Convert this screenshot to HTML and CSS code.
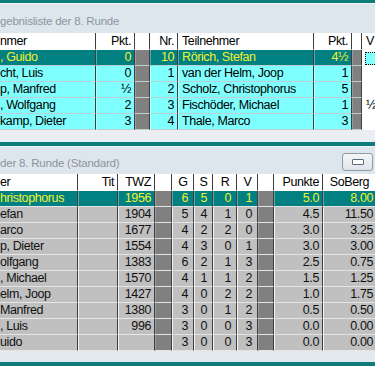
FILE: index.html
```html
<!DOCTYPE html>
<html lang="de">
<head>
    <meta charset="UTF-8">
    <meta name="viewport" content="width=device-width, initial-scale=1.0">
    <title>Turnier</title>
    <link rel="stylesheet" href="styles.css">
</head>
<body>
    <div class="band top"></div>

    <section class="win">
        <div class="caption">
            <span class="caption-text">gebnisliste der 8. Runde</span>
        </div>
        <table class="grid pairs">
            <colgroup>
                <col style="width:96px"><col style="width:39px"><col style="width:15px"><col style="width:28px">
                <col style="width:136px"><col style="width:38px"><col style="width:10px"><col style="width:13px">
            </colgroup>
            <thead>
                <tr><th class="l">nmer</th><th>Pkt.</th><th></th><th>Nr.</th><th class="l">Teilnehmer</th><th>Pkt.</th><th></th><th class="l">V</th></tr>
            </thead>
            <tbody>
                <tr class="sel"><td class="l">, Guido</td><td>0</td><td class="gap"></td><td>10</td><td class="l">Rörich, Stefan</td><td>4½</td><td class="gap"></td><td class="blank focus"><span></span></td></tr>
                <tr><td class="l">cht, Luis</td><td>0</td><td class="gap"></td><td>1</td><td class="l">van der Helm, Joop</td><td>1</td><td class="gap"></td><td class="blank"></td></tr>
                <tr><td class="l">p, Manfred</td><td>½</td><td class="gap"></td><td>2</td><td class="l">Scholz, Christophorus</td><td>5</td><td class="gap"></td><td class="blank"></td></tr>
                <tr><td class="l">, Wolfgang</td><td>2</td><td class="gap"></td><td>3</td><td class="l">Fischöder, Michael</td><td>1</td><td class="gap"></td><td class="blank l">½</td></tr>
                <tr><td class="l">kamp, Dieter</td><td>3</td><td class="gap"></td><td>4</td><td class="l">Thale, Marco</td><td>3</td><td class="gap"></td><td class="blank"></td></tr>
            </tbody>
        </table>
    </section>

    <div class="spacer"></div>
    <div class="band"></div>

    <section class="win">
        <div class="caption second">
            <span class="caption-text">der 8. Runde (Standard)</span>
            <button class="tool" type="button"><span class="tool-icon"></span></button>
        </div>
        <table class="grid standings">
            <colgroup>
                <col style="width:78px"><col style="width:40px"><col style="width:37px"><col style="width:17px">
                <col style="width:22px"><col style="width:19px"><col style="width:24px"><col style="width:21px">
                <col style="width:16px"><col style="width:49px"><col style="width:52px">
            </colgroup>
            <thead>
                <tr><th class="l">er</th><th>Tit</th><th>TWZ</th><th></th><th class="c">G</th><th class="c">S</th><th class="c">R</th><th class="c">V</th><th></th><th>Punkte</th><th class="c">SoBerg</th></tr>
            </thead>
            <tbody>
                <tr class="sel"><td class="l">hristophorus</td><td></td><td>1956</td><td class="gap"></td><td>6</td><td>5</td><td>0</td><td>1</td><td class="gap"></td><td>5.0</td><td>8.00</td></tr>
                <tr><td class="l">efan</td><td></td><td>1904</td><td class="gap"></td><td>5</td><td>4</td><td>1</td><td>0</td><td class="gap"></td><td>4.5</td><td>11.50</td></tr>
                <tr><td class="l">arco</td><td></td><td>1677</td><td class="gap"></td><td>4</td><td>2</td><td>2</td><td>0</td><td class="gap"></td><td>3.0</td><td>3.25</td></tr>
                <tr><td class="l">p, Dieter</td><td></td><td>1554</td><td class="gap"></td><td>4</td><td>3</td><td>0</td><td>1</td><td class="gap"></td><td>3.0</td><td>3.00</td></tr>
                <tr><td class="l">olfgang</td><td></td><td>1383</td><td class="gap"></td><td>6</td><td>2</td><td>1</td><td>3</td><td class="gap"></td><td>2.5</td><td>0.75</td></tr>
                <tr><td class="l">, Michael</td><td></td><td>1570</td><td class="gap"></td><td>4</td><td>1</td><td>1</td><td>2</td><td class="gap"></td><td>1.5</td><td>1.25</td></tr>
                <tr><td class="l">elm, Joop</td><td></td><td>1427</td><td class="gap"></td><td>4</td><td>0</td><td>2</td><td>2</td><td class="gap"></td><td>1.0</td><td>1.75</td></tr>
                <tr><td class="l">Manfred</td><td></td><td>1380</td><td class="gap"></td><td>3</td><td>0</td><td>1</td><td>2</td><td class="gap"></td><td>0.5</td><td>0.50</td></tr>
                <tr><td class="l">, Luis</td><td></td><td>996</td><td class="gap"></td><td>3</td><td>0</td><td>0</td><td>3</td><td class="gap"></td><td>0.0</td><td>0.00</td></tr>
                <tr><td class="l">uido</td><td></td><td></td><td class="gap"></td><td>3</td><td>0</td><td>0</td><td>3</td><td class="gap"></td><td>0.0</td><td>0.00</td></tr>
            </tbody>
        </table>
    </section>

    <div class="foot"></div>
    <div class="band"></div>
</body>
</html>
```

FILE: styles.css
```css
body {
    margin: 0;
    width: 375px;
    height: 366px;
    overflow: hidden;
    background-color: #e9eef3;
    font-family: "Liberation Sans", Arial, sans-serif;
    color: #000;
}
.band {
    height: 4px;
    background-color: #107b7b;
}
.band.top {
    height: 3px;
}
.caption {
    display: flex;
    align-items: center;
    justify-content: space-between;
    height: 29px;
    border-top: 1px solid #f2f5f8;
    background-color: #dde5ed;
    padding-right: 2px;
}
.caption.second {
    height: 27px;
}
.caption-text {
    font-size: 11.5px;
    letter-spacing: -0.2px;
    color: #8c959e;
    padding-top: 5px;
}
.tool {
    width: 31px;
    height: 18px;
    margin-top: 3px;
    border: 1px solid #8e9aa6;
    border-radius: 3px;
    background: linear-gradient(#f4f6f8, #dfe5eb);
    display: flex;
    align-items: center;
    justify-content: center;
    padding: 0;
}
.tool-icon {
    display: block;
    width: 10px;
    height: 4px;
    border: 1px solid #606a74;
    background-color: #fff;
    border-radius: 1px;
}
.spacer {
    height: 12px;
    background-color: #eaeef2;
}
.foot {
    height: 11px;
    background-color: #e3e9ef;
}
.grid {
    table-layout: fixed;
    border-collapse: separate;
    border-spacing: 0;
    width: 375px;
    font-size: 12.5px;
    letter-spacing: -0.4px;
}
.grid th, .grid td {
    padding: 0 3px;
    text-align: right;
    white-space: nowrap;
    overflow: hidden;
    font-weight: normal;
    line-height: 15px;
    border-left: 1px solid #f4f4f4;
    border-right: 1px solid #3e3e3e;
}
.grid th {
    line-height: 16px;
    background-color: #fff;
    border-left-color: #fff;
    border-bottom: 1px solid #fff;
}
.grid .l {
    text-align: left;
}
.grid .c {
    text-align: center;
}
.grid td:first-child, .grid th:first-child {
    padding-left: 0;
    border-left: none;
}
.grid td:last-child, .grid th:last-child {
    border-right: none;
}

/* Paarungen: cyan rows */
.pairs td {
    background-color: #80ffff;
    border-left-color: #c8ffff;
    border-bottom: 1px solid #bcd0d0;
}
.pairs td.blank {
    background-color: #fff;
    border-left-color: #fff;
    border-bottom-color: #fff;
    padding-right: 0;
}
.grid td.gap {
    background-color: #808080;
    border-left-color: #9a9a9a;
    padding: 0;
}
.grid tr.sel td {
    background-color: #008080;
    border-left-color: #5aa8a8;
    color: #f2f230;
}
.grid tr.sel td.gap {
    background-color: #808080;
    border-left-color: #9a9a9a;
}
.pairs tr.sel td.focus {
    background-color: #fff;
    border-left-color: #fff;
    padding: 1px 0 0 2px;
}
.focus span {
    display: block;
    height: 11px;
    border: 1px dotted #000;
    border-right: none;
    background-color: #80ffff;
}

/* Tabelle: silver rows */
.standings td {
    background-color: #c0c0c0;
    color: #111;
    border-bottom: 1px solid #e4e4e4;
}
.standings td:nth-child(n+5):nth-child(-n+8) {
    padding-right: 5px;
}
.standings td:last-child {
    padding-right: 2px;
}
```
